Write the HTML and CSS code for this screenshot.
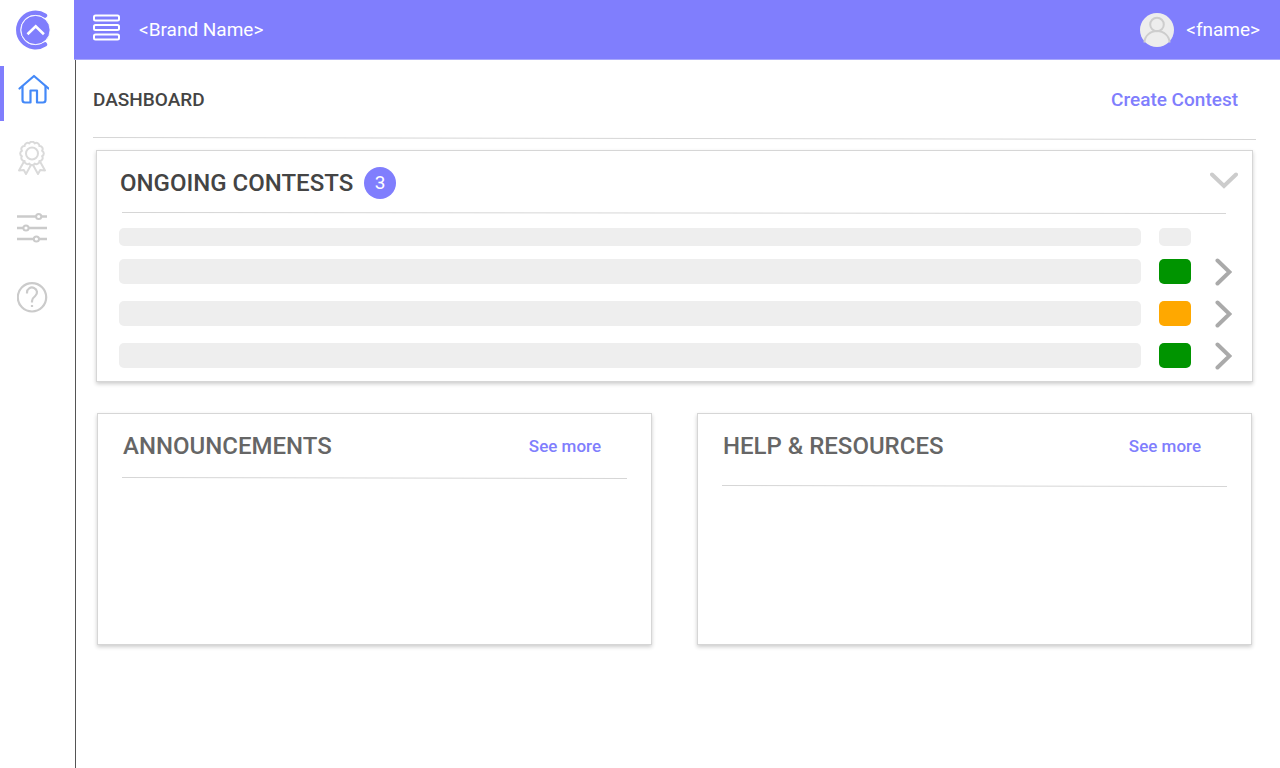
FILE: index.html
```html
<!DOCTYPE html>
<html lang="en">
<head>
<meta charset="utf-8">
<meta name="viewport" content="width=device-width, initial-scale=1">
<title>Dashboard</title>
<link rel="stylesheet" href="styles.css">
</head>
<body>
<div class="app">
  <aside class="sidebar">
    <a class="logo" href="#" aria-label="Home page">
      <svg width="36" height="40" viewBox="0 0 36 40">
        <path d="M29 5.600A17.250 17.250 0 1 0 29 34.400" fill="none" stroke="#807efd" stroke-width="4.400" stroke-linecap="round"/>
        <circle cx="19.500" cy="20" r="14.600" fill="#807efd" stroke="#fff" stroke-width="0.900"/>
        <path d="M11.500 24.300l8.200-8 8.200 8" fill="none" stroke="#fff" stroke-width="2.600"/>
      </svg>
    </a>
    <nav class="nav">
      <a class="nav-item active" href="#" aria-label="Dashboard">
        <svg width="32" height="32" viewBox="0 0 32 32" fill="none" stroke="#4489f8" stroke-width="2.200" stroke-linejoin="round" stroke-linecap="round">
          <path d="M2.500 14.500L17 2l14.500 12.500"/>
          <path d="M5.500 12.500V26q0 2.500 2.500 2.500h5.500V16.500h6.500v12h6q2.500 0 2.500-2.500V12.500"/>
        </svg>
      </a>
      <a class="nav-item" href="#" aria-label="Contests">
        <svg width="32" height="36" viewBox="0 0 32 36" fill="none" stroke="#dadada" stroke-width="2" stroke-linejoin="round">
          <path d="M25.100 9.800A3 3 0 0 1 25.100 15.200A3 3 0 0 1 22.400 19.900A3 3 0 0 1 17.700 22.600A3 3 0 0 1 12.300 22.600A3 3 0 0 1 7.600 19.900A3 3 0 0 1 4.900 15.200A3 3 0 0 1 4.900 9.800A3 3 0 0 1 7.600 5.100A3 3 0 0 1 12.300 2.400A3 3 0 0 1 17.700 2.400A3 3 0 0 1 22.400 5.100A3 3 0 0 1 25.100 9.800z"/>
          <circle cx="15" cy="12.500" r="6"/>
          <path d="M7 20.500L2 29.500l4.800-.5L9 33l5.500-10M23 20.500l5 9-4.800-.5-2.200 4-5.500-10"/>
        </svg>
      </a>
      <a class="nav-item" href="#" aria-label="Settings">
        <svg width="32" height="32" viewBox="0 0 32 32" stroke="#cbcbcb" stroke-width="2.400">
          <path d="M0 4.500h30M0 16h30M0 27h30"/>
          <g fill="#fff" stroke-width="2"><circle cx="21.700" cy="4.500" r="2.600"/><circle cx="9" cy="16" r="2.600"/><circle cx="19.400" cy="27" r="2.600"/></g>
        </svg>
      </a>
      <a class="nav-item" href="#" aria-label="Help">
        <svg width="32" height="32" viewBox="0 0 32 32" fill="none" stroke="#cbcbcb" stroke-width="2.200">
          <circle cx="15" cy="16.300" r="14.200"/>
          <path d="M10 12.500v-1a5 4.800 0 1 1 8.200 3.500Q15 17.500 15 20v1.500M15 24v2"/>
        </svg>
      </a>
    </nav>
  </aside>

  <div class="page">
    <header class="topbar">
      <button class="icon-button" type="button" aria-label="Menu">
        <svg width="28" height="28" viewBox="0 0 28 28" fill="none" stroke="#fff" stroke-width="2">
          <rect x="1" y="1.500" width="25" height="5" rx="1.500"/>
          <rect x="1" y="11" width="25" height="5" rx="1.500"/>
          <rect x="1" y="20.500" width="25" height="5" rx="1.500"/>
        </svg>
      </button>
      <span class="brand">&lt;Brand Name&gt;</span>
      <a class="user" href="#">
        <svg width="34" height="34" viewBox="0 0 34 34">
          <circle cx="17" cy="17" r="17" fill="#ededed"/>
          <g fill="none" stroke="#cdcdcd" stroke-width="2">
            <circle cx="17" cy="11.500" r="6.800"/>
            <path d="M4.500 29.500a12.500 11.500 0 0 1 25 0"/>
          </g>
        </svg>
        <span>&lt;fname&gt;</span>
      </a>
    </header>

    <main class="content">
      <div class="page-head">
        <h1>DASHBOARD</h1>
        <a class="create" href="#">Create Contest</a>
      </div>
      <svg class="rule" aria-hidden="true"><line x1="0" y1="0.500" x2="100%" y2="2.500"/></svg>

      <section class="card contests">
        <div class="contests-head">
          <h2>ONGOING CONTESTS</h2>
          <span class="badge">3</span>
          <button class="icon-button toggle" type="button" aria-label="Collapse">
            <svg width="28" height="18" viewBox="0 0 28 18" fill="none" stroke="#ccc" stroke-width="4" stroke-linecap="round"><path d="M2 2.500l12 11.500L26 2.500"/></svg>
          </button>
        </div>
        <svg class="rule" aria-hidden="true"><line x1="0" y1="0.500" x2="100%" y2="1.500"/></svg>
        <ul class="rows">
          <li class="row row-head"><span class="bar"></span><span class="status"></span></li>
          <li class="row"><span class="bar"></span><span class="status green"></span><button class="icon-button open" type="button" aria-label="Open contest 1"><svg width="17" height="28" viewBox="0 0 17 28"><path d="M2.500 2.500L14.500 14 2.500 25.500"/></svg></button></li>
          <li class="row"><span class="bar"></span><span class="status orange"></span><button class="icon-button open" type="button" aria-label="Open contest 2"><svg width="17" height="28" viewBox="0 0 17 28"><path d="M2.500 2.500L14.500 14 2.500 25.500"/></svg></button></li>
          <li class="row"><span class="bar"></span><span class="status green"></span><button class="icon-button open" type="button" aria-label="Open contest 3"><svg width="17" height="28" viewBox="0 0 17 28"><path d="M2.500 2.500L14.500 14 2.500 25.500"/></svg></button></li>
        </ul>
      </section>

      <div class="panels">
        <section class="card panel">
          <div class="panel-head"><h2>ANNOUNCEMENTS</h2><a href="#">See more</a></div>
          <svg class="rule" aria-hidden="true"><line x1="0" y1="0.500" x2="100%" y2="1.500"/></svg>
        </section>
        <section class="card panel resources">
          <div class="panel-head"><h2>HELP &amp; RESOURCES</h2><a href="#">See more</a></div>
          <svg class="rule" aria-hidden="true"><line x1="0" y1="0.500" x2="100%" y2="1.500"/></svg>
        </section>
      </div>
    </main>
  </div>
</div>
</body>
</html>
```
FILE: styles.css
```css
* { box-sizing: border-box; }
body {
  margin: 0;
  background: #fff;
  color: #444;
  font-family: Roboto, "Liberation Sans", sans-serif;
}
h1, h2 { margin: 0; font-weight: 500; }
a { color: #807efd; text-decoration: none; }
svg { display: block; flex: none; }
.icon-button { display: block; padding: 0; border: 0; background: none; cursor: pointer; }

.app { display: grid; grid-template-columns: 74px 1fr; min-height: 100vh; }

.sidebar { display: flex; flex-direction: column; }
.logo { padding: 10px 0 16px 16px; }
.nav { display: flex; flex-direction: column; gap: 14px; }
.nav-item {
  display: flex;
  align-items: center;
  height: 55px;
  padding: 0 0 7px 13px;
  border-left: 4px solid transparent;
}
.nav-item.active { border-left-color: #807efd; }

.page { display: flex; flex-direction: column; min-width: 0; }
.topbar {
  display: flex;
  align-items: center;
  height: 60px;
  padding: 0 20px 0 19px;
  background: #807efd;
  border-bottom: 1px solid #a9a8fb;
  color: #fff;
}
.topbar .icon-button { padding-bottom: 4px; }
.brand { margin-left: 18px; font-size: 19px; line-height: 24px; }
.user {
  display: flex;
  align-items: center;
  gap: 12px;
  margin-left: auto;
  color: #fff;
  font-size: 19px;
  line-height: 24px;
}

.content {
  flex: 1;
  margin-left: 1px;
  padding: 0 24px 24px 17px;
  border-left: 1px solid #555;
}
.rule { width: 100%; height: 3px; stroke: #d6d6d6; stroke-width: 1; }
.page-head {
  display: flex;
  align-items: center;
  justify-content: space-between;
  height: 77px;
  padding: 2px 18px 0 0;
}
.page-head h1 { font-size: 19px; line-height: 24px; }
.create { font-size: 19px; font-weight: 500; line-height: 24px; }

.card {
  background: #fff;
  border: 1px solid #d6d6d6;
  box-shadow: 0 2px 4px rgba(0, 0, 0, 0.2);
}
.contests { margin: 10px 3px 0; padding: 0 14px 13px 22px; }
.contests-head { display: flex; align-items: center; height: 61px; padding: 3px 0 0 1px; }
.contests-head h2 { font-size: 24px; line-height: 32px; }
.badge {
  width: 32px;
  height: 32px;
  margin-left: 11px;
  border-radius: 50%;
  background: #807efd;
  color: #fff;
  font-size: 19px;
  line-height: 32px;
  text-align: center;
}
.toggle { margin-left: auto; padding-bottom: 4px; }
.contests .rule { width: calc(100% - 15px); margin-left: 3px; }

.rows { display: grid; gap: 17px; margin: 13px 6px 0 0; padding: 0; list-style: none; }
.row {
  display: grid;
  grid-template: 100% / 1fr 56px 17px;
  align-items: center;
  height: 25px;
}
.row-head { height: 18px; margin-bottom: -4px; }
.bar, .status { height: 100%; border-radius: 5px; background: #eee; }
.bar { margin-right: 18px; }
.status { width: 32px; }
.green { background: #009400; }
.orange { background: #ffa800; }
.open svg { fill: none; stroke: #aaa; stroke-width: 4; stroke-linecap: round; }

.panels { display: grid; grid-template-columns: 1fr 1fr; gap: 45px; margin: 31px 4px 0; }
.panel { min-height: 232px; padding: 0 24px; }
.panel-head {
  display: flex;
  align-items: center;
  justify-content: space-between;
  height: 63px;
  padding: 1px 26px 0 1px;
}
.panel-head h2 { color: #666; font-size: 24px; line-height: 32px; }
.panel-head a { font-size: 17px; font-weight: 500; line-height: 24px; }
.resources .rule { margin-top: 8px; }
```
